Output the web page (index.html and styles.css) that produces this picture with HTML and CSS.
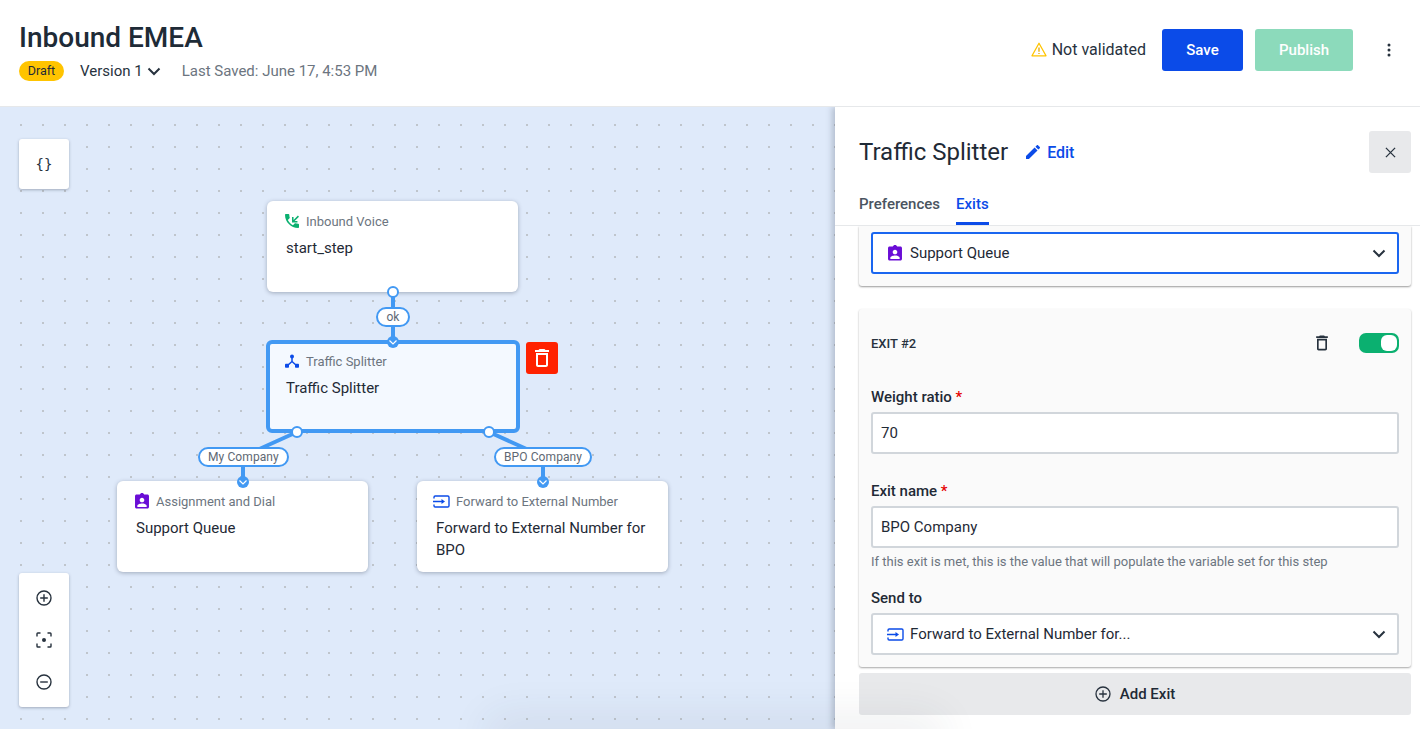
FILE: index.html
```html
<!DOCTYPE html>
<html lang="en">
<head>
<meta charset="utf-8">
<title>Inbound EMEA</title>
<link rel="stylesheet" href="styles.css">
</head>
<body>
<header class="topbar">
  <div class="topbar-left">
    <h1 class="flow-name">Inbound EMEA</h1>
    <div class="flow-meta">
      <span class="badge">Draft</span>
      <span class="version">Version 1
        <svg class="chev" viewBox="0 0 14 9"><path d="M1.500 1.500 7 7l5.500-5.500" /></svg>
      </span>
      <span class="saved">Last Saved: June 17, 4:53 PM</span>
    </div>
  </div>
  <div class="topbar-right">
    <span class="status">
      <svg class="warn" viewBox="0 0 16 15"><path class="warn-tri" d="M8 1.300 15 13.800H1z"/><path class="warn-mark" d="M8 5.600v4.200M8 10.900v1.200"/></svg>
      Not validated
    </span>
    <button class="btn btn-save">Save</button>
    <button class="btn btn-publish">Publish</button>
    <svg class="more" viewBox="0 0 4 14"><circle cx="2" cy="2" r="1.500"/><circle cx="2" cy="7" r="1.500"/><circle cx="2" cy="12" r="1.500"/></svg>
  </div>
</header>

<main class="workspace">
  <section class="canvas">
    <div class="tool tool-vars"><span class="braces">{}</span></div>
    <div class="tool tool-zoom">
      <svg class="tool-icon" viewBox="0 0 16 16"><circle cx="8" cy="8" r="7"/><path d="M8 4.200v7.600M4.200 8h7.600"/></svg>
      <svg class="tool-icon" viewBox="0 0 16 16"><path d="M1 4.500V1.800a.8.8 0 0 1 .8-.8h2.700M11.500 1h2.700a.8.8 0 0 1 .8.8v2.700M15 11.500v2.700a.8.8 0 0 1-.8.8h-2.700M4.500 15H1.800a.8.8 0 0 1-.8-.8v-2.700"/><circle class="solid" cx="8" cy="8" r="2"/></svg>
      <svg class="tool-icon" viewBox="0 0 16 16"><circle cx="8" cy="8" r="7"/><path d="M4.200 8h7.600"/></svg>
    </div>

    <article class="node node-start">
      <div class="node-type">
        <svg class="ico" viewBox="3 3 18 18"><path class="green" d="M20 15.500c-1.250 0-2.450-.2-3.570-.57-.35-.11-.74-.03-1.020.24l-2.200 2.200c-2.830-1.440-5.150-3.750-6.590-6.590l2.200-2.210c.28-.27.36-.66.25-1.010C8.700 6.450 8.500 5.250 8.500 4c0-.55-.45-1-1-1H4c-.55 0-1 .45-1 1 0 9.390 7.610 17 17 17 .55 0 1-.45 1-1v-3.500c0-.55-.45-1-1-1zM21 6.410 19.590 5 14 10.590V7h-2v7h7v-2h-3.590L21 6.410z"/></svg>
        Inbound Voice
      </div>
      <div class="node-name">start_step</div>
    </article>

    <article class="node node-split">
      <div class="node-type">
        <svg class="ico" viewBox="0 0 14 14"><path class="split-line" d="M7 2.500v5L2.500 11.500M7 7.500l4.500 4"/><circle class="blue" cx="7" cy="2.500" r="2"/><rect class="blue" x="0" y="9.800" width="4" height="4" rx=".8"/><rect class="blue" x="10" y="9.800" width="4" height="4" rx=".8"/></svg>
        Traffic Splitter
      </div>
      <div class="node-name">Traffic Splitter</div>
    </article>

    <article class="node node-queue">
      <div class="node-type">
        <svg class="ico ico-badge" viewBox="3 1 18 20"><path class="purple" d="M19 3h-4.180C14.400 1.840 13.300 1 12 1c-1.300 0-2.400.84-2.820 2H5c-1.100 0-2 .9-2 2v14c0 1.100.9 2 2 2h14c1.100 0 2-.9 2-2V5c0-1.100-.9-2-2-2zm-7 4c1.660 0 3 1.340 3 3s-1.340 3-3 3-3-1.340-3-3 1.340-3 3-3zm6 12H6v-1.400c0-2 4-3.100 6-3.100s6 1.100 6 3.100V19z"/></svg>
        Assignment and Dial
      </div>
      <div class="node-name">Support Queue</div>
    </article>

    <article class="node node-forward">
      <div class="node-type">
        <svg class="ico-wide" viewBox="0 0 17 13"><path class="fwd" d="M1 3.500V2.200A1.200 1.200 0 0 1 2.200 1h12.600A1.200 1.200 0 0 1 16 2.200v8.600a1.200 1.200 0 0 1-1.200 1.200H2.200A1.200 1.200 0 0 1 1 10.800V9.500M0 6.500h9.500"/><path class="blue" d="M8.500 4v5l3.500-2.500z"/></svg>
        Forward to External Number
      </div>
      <div class="node-name">Forward to External Number for BPO</div>
    </article>

    <svg class="wires" viewBox="0 107 835 622">
      <path class="wire" d="M393 292v50M297 432l-42 19M489 432l42 19M243 466v16M543 466v16"/>
      <circle class="port" cx="393" cy="292" r="5"/>
      <circle class="port" cx="297" cy="432" r="5"/>
      <circle class="port" cx="489" cy="432" r="5"/>
      <circle class="entry" cx="393" cy="342" r="6"/>
      <circle class="entry" cx="243" cy="482" r="6"/>
      <circle class="entry" cx="543" cy="482" r="6"/>
      <path class="entry-chev" d="M389.500 340.500 393 344l3.500-3.500M239.500 480.500 243 484l3.500-3.500M539.500 480.500 543 484l3.500-3.500"/>
    </svg>

    <span class="pill pill-ok">ok</span>
    <span class="pill pill-my">My Company</span>
    <span class="pill pill-bpo">BPO Company</span>

    <div class="node-delete">
      <svg viewBox="0 0 24 24"><path d="M6 19c0 1.100.9 2 2 2h8c1.100 0 2-.9 2-2V7H6v12zM8 9h8v10H8V9zm7.500-5-1-1h-5l-1 1H5v2h14V4z"/></svg>
    </div>
  </section>

  <aside class="panel">
    <div class="panel-head">
      <h2 class="panel-title">Traffic Splitter</h2>
      <span class="edit">
        <svg viewBox="3 3 18 18"><path d="M3 17.250V21h3.750L17.810 9.940l-3.750-3.750L3 17.250zM20.710 7.040c.39-.39.39-1.020 0-1.410l-2.340-2.340c-.39-.39-1.020-.39-1.410 0l-1.830 1.830 3.750 3.750 1.830-1.830z"/></svg>
        Edit
      </span>
      <button class="close" aria-label="Close">
        <svg viewBox="0 0 12 12"><path d="M1 1l10 10M11 1 1 11"/></svg>
      </button>
    </div>
    <nav class="tabs">
      <span class="tab">Preferences</span>
      <span class="tab tab-active">Exits</span>
    </nav>
    <div class="panel-body">
      <div class="card card-cut">
        <div class="select select-focus">
          <svg class="ico ico-badge" viewBox="3 1 18 20"><path class="purple" d="M19 3h-4.180C14.400 1.840 13.300 1 12 1c-1.300 0-2.400.84-2.820 2H5c-1.100 0-2 .9-2 2v14c0 1.100.9 2 2 2h14c1.100 0 2-.9 2-2V5c0-1.100-.9-2-2-2zm-7 4c1.660 0 3 1.340 3 3s-1.340 3-3 3-3-1.340-3-3 1.340-3 3-3zm6 12H6v-1.400c0-2 4-3.100 6-3.100s6 1.100 6 3.100V19z"/></svg>
          <span class="select-text">Support Queue</span>
          <svg class="chev" viewBox="0 0 14 9"><path d="M1.500 1.500 7 7l5.500-5.500"/></svg>
        </div>
      </div>
      <div class="card card-exit">
        <div class="exit-head">
          <span class="exit-title">EXIT #2</span>
          <svg class="exit-trash" viewBox="0 0 24 24"><path d="M6 19c0 1.100.9 2 2 2h8c1.100 0 2-.9 2-2V7H6v12zM8 9h8v10H8V9zm7.500-5-1-1h-5l-1 1H5v2h14V4z"/></svg>
          <span class="toggle"><span class="knob"></span></span>
        </div>
        <label class="label label-weight">Weight ratio <em>*</em></label>
        <div class="input">70</div>
        <label class="label label-name">Exit name <em>*</em></label>
        <div class="input">BPO Company</div>
        <p class="help">If this exit is met, this is the value that will populate the variable set for this step</p>
        <label class="label label-send">Send to</label>
        <div class="select">
          <svg class="ico-wide" viewBox="0 0 17 13"><path class="fwd" d="M1 3.500V2.200A1.200 1.200 0 0 1 2.200 1h12.600A1.200 1.200 0 0 1 16 2.200v8.600a1.200 1.200 0 0 1-1.200 1.200H2.200A1.200 1.200 0 0 1 1 10.800V9.500M0 6.500h9.500"/><path class="blue" d="M8.500 4v5l3.500-2.500z"/></svg>
          <span class="select-text">Forward to External Number for...</span>
          <svg class="chev" viewBox="0 0 14 9"><path d="M1.500 1.500 7 7l5.500-5.500"/></svg>
        </div>
      </div>
      <button class="add-exit">
        <svg viewBox="0 0 16 16"><circle cx="8" cy="8" r="7"/><path d="M8 4.200v7.600M4.200 8h7.600"/></svg>
        Add Exit
      </button>
    </div>
  </aside>
  <div class="bottom-fade"></div>
</main>
</body>
</html>
```

FILE: styles.css
```css
* { box-sizing: border-box; }
html, body { margin: 0; height: 100%; overflow: hidden; }
body {
  font-family: Roboto, "Liberation Sans", sans-serif;
  color: #1f2a36;
  background: #fff;
  display: flex;
  flex-direction: column;
  height: 729px;
}
svg { display: block; flex: none; }

/* top bar */
.topbar {
  height: 107px;
  flex: none;
  display: flex;
  justify-content: space-between;
  align-items: flex-start;
  padding: 21px 29px 0 19px;
  border-bottom: 1px solid #e6e8ea;
}
.flow-name { margin: 0; font-size: 28px; line-height: 34px; font-weight: 500; color: #1e2b37; }
.flow-meta { display: flex; align-items: center; margin-top: 6px; font-size: 15px; height: 20px; }
.badge {
  background: #ffc400; border-radius: 10px; height: 20px; width: 45px;
  font-size: 12.500px; line-height: 20px; text-align: center; color: #1f2a36;
}
.version { display: flex; align-items: center; gap: 4px; margin-left: 16px; color: #27323e; }
.chev { width: 14px; height: 9px; fill: none; stroke: #27323e; stroke-width: 2; }
.saved { margin-left: 21px; color: #6c7580; }

.topbar-right { display: flex; align-items: center; height: 42px; margin-top: 8px; }
.status { display: flex; align-items: center; gap: 5px; padding-bottom: 2px; font-size: 16px; color: #27323e; }
.warn { width: 16px; height: 15px; }
.warn-tri { fill: none; stroke: #ffc400; stroke-width: 1.300; stroke-linejoin: round; }
.warn-mark { fill: none; stroke: #e5a900; stroke-width: 1.300; }
.btn {
  height: 42px; border: 0; border-radius: 3px; color: #fff;
  font: 500 15px Roboto, sans-serif;
}
.btn-save { width: 81px; margin-left: 16px; background: #0b4be8; }
.btn-publish { width: 98px; margin-left: 12px; background: #8cdabb; }
.more { width: 4px; height: 14px; margin-left: 34px; fill: #27323e; }

/* workspace */
.workspace { flex: 1; min-height: 0; display: flex; position: relative; overflow: hidden; }
.canvas {
  position: relative;
  width: 835px;
  flex: none;
  background-color: #dfeafa;
  background-image: radial-gradient(circle at 1px 1px, #bfc5cc 1px, transparent 1.300px);
  background-size: 22px 22px;
  background-position: 20px 17px;
}

.tool {
  position: absolute;
  left: 19px;
  width: 50px;
  background: #fff;
  border-radius: 3px;
  box-shadow: 0 1px 3px rgba(40, 50, 70, .35);
}
.tool-vars {
  top: 32px; height: 50px;
  display: flex; align-items: center; justify-content: center;
}
.braces { font: 14px "DejaVu Sans Mono", monospace; color: #27323e; }
.tool-zoom {
  top: 466px; height: 134px;
  display: flex; flex-direction: column; align-items: center; justify-content: space-between;
  padding: 17px 0;
}
.tool-icon { width: 16px; height: 16px; fill: none; stroke: #27323e; stroke-width: 1.400; }
.tool-icon .solid { fill: #27323e; stroke: none; }

.node {
  position: absolute;
  width: 251px;
  height: 91px;
  background: #fff;
  border-radius: 6px;
  padding: 11px 19px;
  box-shadow: 0 1px 4px rgba(40, 50, 70, .35);
}
.node-start { left: 267px; top: 94px; }
.node-split {
  left: 266px; top: 233px; width: 254px; height: 93px;
  background: #f4f9ff;
  border: 4px solid #4299f3;
  padding: 8px 16px;
  box-shadow: none;
}
.node-queue { left: 117px; top: 374px; }
.node-forward { left: 417px; top: 374px; }
.node-type { display: flex; align-items: center; gap: 7px; height: 18px; font-size: 13px; color: #6c7580; }
.node-name { margin-top: 7px; font-size: 15px; line-height: 22px; color: #1f2a36; }
.ico { width: 14px; height: 14px; margin-left: -1px; }
.ico-badge { height: 15.500px; }
.ico-wide { width: 17px; height: 13px; margin: 0 -1px 0 -3px; }
.green { fill: #0bb070; }
.purple { fill: #6a0dd6; }
.blue { fill: #0b4be8; }
.split-line { fill: none; stroke: #0b4be8; stroke-width: 1.500; }
.fwd { fill: none; stroke: #0b4be8; stroke-width: 1.400; }

.wires { position: absolute; left: 0; top: 0; width: 835px; height: 622px; pointer-events: none; }
.wire { fill: none; stroke: #4299f3; stroke-width: 4; }
.port { fill: #fff; stroke: #4299f3; stroke-width: 2; }
.entry { fill: #4299f3; }
.entry-chev { fill: none; stroke: #fff; stroke-width: 1.200; }

.pill {
  position: absolute;
  height: 20px;
  min-width: 34px;
  padding: 0 8px;
  background: #fff;
  border: 2px solid #4299f3;
  border-radius: 10px;
  font-size: 12px;
  letter-spacing: .1px;
  line-height: 16px;
  text-align: center;
  color: #5e6873;
  white-space: nowrap;
}
.pill-ok { left: 376px; top: 200px; }
.pill-my { left: 198px; top: 340px; }
.pill-bpo { left: 494px; top: 340px; }

.node-delete {
  position: absolute; left: 526px; top: 235px; width: 32px; height: 32px;
  background: #ff2200; border-radius: 3px;
  display: flex; align-items: center; justify-content: center;
}
.node-delete svg { width: 24px; height: 24px; fill: #fff; }

/* side panel */
.panel {
  flex: 1;
  display: flex;
  flex-direction: column;
  background: #fff;
  box-shadow: -3px 0 6px rgba(50, 60, 80, .25);
  z-index: 1;
}
.panel-head { display: flex; align-items: center; height: 66px; flex: none; padding: 0 9px 0 24px; margin-top: 12px; }
.panel-title { margin: 0; font-size: 24px; font-weight: 400; color: #1f2a36; }
.edit { display: flex; align-items: center; gap: 7px; margin-left: 18px; font-size: 16px; font-weight: 500; color: #0b4be8; }
.edit svg { width: 14px; height: 14px; fill: #0b4be8; }
.close {
  margin-left: auto; width: 42px; height: 42px; border: 0; border-radius: 3px; background: #e8e9eb;
  display: flex; align-items: center; justify-content: center; padding: 0;
}
.close svg { width: 11px; height: 11px; fill: none; stroke: #27323e; stroke-width: 1.400; }

.tabs { display: flex; gap: 16px; height: 41px; flex: none; padding: 0 0 0 24px; border-bottom: 1px solid #e6e8ea; font-size: 15px; font-weight: 500; }
.tab { color: #4a5460; line-height: 38px; height: 40px; }
.tab-active { color: #0b4be8; border-bottom: 3px solid #0b4be8; }

.panel-body { flex: 1; min-height: 0; padding: 0 9px 0 24px; overflow: hidden; display: flex; flex-direction: column; }
.card { background: #fafafa; border-radius: 3px; box-shadow: 0 1px 2px rgba(0, 0, 0, .4); padding: 0 12px; flex: none; }
.card-cut { padding-top: 6px; padding-bottom: 12px; border-radius: 0 0 3px 3px; }
.card-exit { margin-top: 23px; height: 358px; box-shadow: 0 1px 2px rgba(0, 0, 0, .35); }

.select {
  display: flex; align-items: center; gap: 8px;
  height: 42px; padding: 0 11px 0 15px;
  background: #fff; border: 2px solid #d1d6db; border-radius: 3px;
  font-size: 15px; color: #1f2a36;
}
.select-focus { border-color: #1a66f0; }
.select-text { flex: 1; }
.select .ico { margin-left: 0; }
.select .ico-wide { margin: 0 -2px 0 -1px; }

.exit-head { display: flex; align-items: center; height: 20px; margin-top: 24px; }
.exit-title { flex: 1; padding-top: 1px; font-size: 13px; font-weight: 500; color: #27323e; }
.exit-trash { width: 20px; height: 20px; fill: #27323e; }
.toggle { width: 40px; height: 20px; margin-left: 27px; border-radius: 7px; background: #0bb070; position: relative; }
.knob { position: absolute; right: 2px; top: 2px; width: 16px; height: 16px; border-radius: 6px; background: #fff; }

.label { display: block; font-size: 15px; font-weight: 500; line-height: 18px; color: #1f2a36; }
.label em { font-style: normal; color: #e60000; }
.label-weight { margin-top: 35px; }
.label-name { margin-top: 28px; }
.label-send { margin-top: 19px; }
.input {
  height: 42px; margin-top: 6px; padding: 0 8px;
  background: #fff; border: 2px solid #d1d6db; border-radius: 3px;
  font-size: 15px; line-height: 38px; color: #1f2a36;
}
.help { margin: 6px 0 0; font-size: 13px; line-height: 16px; color: #6c7580; }
.card-exit .select { margin-top: 6px; }

.add-exit {
  flex: none; margin-top: 6px; height: 42px; width: 100%; border: 0; border-radius: 3px; background: #e8e9eb;
  display: flex; align-items: center; justify-content: center; gap: 9px;
  font: 500 15px Roboto, sans-serif; color: #1f2a36;
}
.add-exit svg { width: 16px; height: 16px; fill: none; stroke: #27323e; stroke-width: 1.300; }

.bottom-fade {
  position: absolute;
  left: 500px; bottom: -14px; width: 430px; height: 14px;
  box-shadow: 0 0 40px 16px rgba(40, 50, 70, .07);
  border-radius: 20px;
  z-index: 2;
  pointer-events: none;
}
```
